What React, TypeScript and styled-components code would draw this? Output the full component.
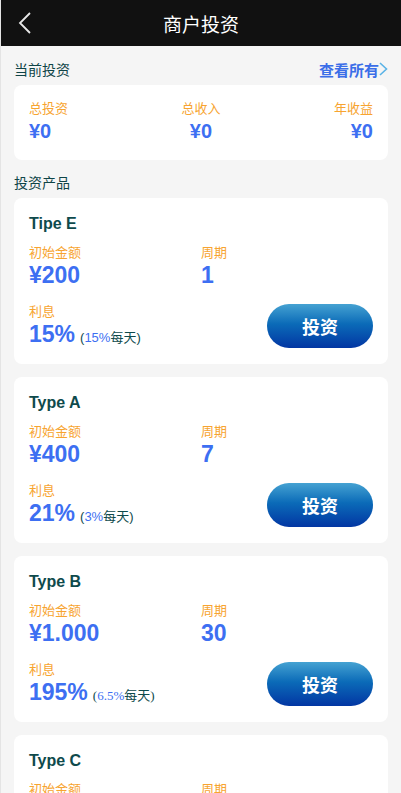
import React from 'react'
import styled, { createGlobalStyle } from 'styled-components'

const GlobalStyle = createGlobalStyle`
    body {
        margin: 0;
        background: #f5f5f5;
        font-family: 'Liberation Sans', 'Noto Sans CJK SC', sans-serif;
    }
`

const Page = styled.div`
    min-height: 793px;
    background: #f5f5f5;
    border-left: 1px solid #e4e4e4;
    box-sizing: border-box;
`

const Header = styled.div`
    height: 46px;
    background: #111111;
    display: flex;
    align-items: center;
    justify-content: center;
    position: relative;
`

const Back = styled.div`
    position: absolute;
    left: 14px;
    top: 11px;
    display: flex;
`

const HeaderTitle = styled.h1`
    margin: 0;
    color: #fff;
    font-size: 19px;
    font-weight: 400;
    font-family: 'Noto Sans CJK SC', sans-serif;
`

const Body = styled.div`
    padding: 0 13px;
`

const SectionRow = styled.div<{ $top?: number }>`
    display: flex;
    justify-content: space-between;
    align-items: center;
    height: 24px;
    margin: ${(p) => p.$top ?? 11}px 0 4px;
`

const SectionTitle = styled.span`
    font-size: 14px;
    color: #0e4447;
    font-family: 'Noto Sans CJK SC', sans-serif;
`

const More = styled.span`
    font-size: 15px;
    font-weight: 700;
    color: #3b6ee8;
    font-family: 'Noto Sans CJK SC', sans-serif;
    display: flex;
    align-items: center;
`

const Card = styled.div`
    background: #fff;
    border-radius: 8px;
    padding: 14px 15px 15px;
    margin-bottom: 13px;
`

const SummaryGrid = styled.div`
    display: grid;
    grid-template-columns: 1fr 1fr 1fr;
`

const SummaryCell = styled.div<{ $align: string }>`
    display: flex;
    flex-direction: column;
    align-items: ${(p) => p.$align};
`

const Label = styled.span`
    font-size: 13px;
    line-height: 18px;
    color: #f7a430;
    font-family: 'Noto Sans CJK SC', sans-serif;
`

const SumValue = styled.span`
    font-size: 20px;
    line-height: 28px;
    font-weight: 700;
    color: #3d6ff2;
`

const ProductCard = styled(Card)`
    padding: 15px 15px 16px;
    height: 135px;
    box-sizing: content-box;
`

const ProductTitle = styled.div`
    font-size: 16px;
    font-weight: 700;
    line-height: 22px;
    color: #0e4a4c;
    margin-bottom: 8px;
`

const TopRow = styled.div`
    display: grid;
    grid-template-columns: 172px 1fr;
    margin-bottom: 13px;
`

const Col = styled.div`
    display: flex;
    flex-direction: column;
`

const BigValue = styled.span`
    font-size: 23px;
    line-height: 28px;
    font-weight: 700;
    color: #3d6ff2;
`

const BottomRow = styled.div`
    display: flex;
    justify-content: space-between;
    align-items: flex-start;
`

const Rate = styled.div`
    display: flex;
    align-items: baseline;
`

const Daily = styled.span<{ $serif?: boolean }>`
    font-size: 13px;
    color: #0e4a4c;
    margin-left: 5px;
    font-family: ${(p) => (p.$serif ? "'Liberation Serif', serif" : "'Liberation Sans', sans-serif")};
    b {
        font-weight: 400;
        color: #3d6ff2;
    }
    i {
        font-style: normal;
        font-family: 'Noto Sans CJK SC', sans-serif;
    }
`

const InvestButton = styled.button`
    width: 106px;
    height: 44px;
    border: none;
    border-radius: 22px;
    background: linear-gradient(180deg, #45a2d2 0%, #0b6bb8 45%, #0236a3 100%);
    color: #fff;
    font-size: 18px;
    font-weight: 700;
    font-family: 'Noto Sans CJK SC', sans-serif;
    margin-top: 2px;
`

const products = [
    { name: 'Tipe E', amount: '¥200', period: '1', rate: '15%', daily: '15%' },
    { name: 'Type A', amount: '¥400', period: '7', rate: '21%', daily: '3%' },
    { name: 'Type B', amount: '¥1.000', period: '30', rate: '195%', daily: '6.5%', serif: true },
    { name: 'Type C', amount: '¥3.000', period: '60', rate: '300%', daily: '5%' },
]

const App = () => {
    return (
        <Page>
            <GlobalStyle />
            <Header>
                <Back>
                    <svg width="20" height="24" viewBox="0 0 20 24">
                        <path d="M15 2 L5 12 L15 22" fill="none" stroke="#e8e8e8" strokeWidth="1.8" />
                    </svg>
                </Back>
                <HeaderTitle>商户投资</HeaderTitle>
            </Header>
            <Body>
                <SectionRow>
                    <SectionTitle>当前投资</SectionTitle>
                    <More>
                        查看所有
                        <svg width="9" height="14" viewBox="0 0 9 14">
                            <path d="M1 1 L7.5 7 L1 13" fill="none" stroke="#5ab3e6" strokeWidth="1.6" />
                        </svg>
                    </More>
                </SectionRow>
                <Card>
                    <SummaryGrid>
                        <SummaryCell $align="flex-start">
                            <Label>总投资</Label>
                            <SumValue>¥0</SumValue>
                        </SummaryCell>
                        <SummaryCell $align="center">
                            <Label>总收入</Label>
                            <SumValue>¥0</SumValue>
                        </SummaryCell>
                        <SummaryCell $align="flex-end">
                            <Label>年收益</Label>
                            <SumValue>¥0</SumValue>
                        </SummaryCell>
                    </SummaryGrid>
                </Card>
                <SectionRow $top={-3}>
                    <SectionTitle>投资产品</SectionTitle>
                </SectionRow>
                {products.map((p) => (
                    <ProductCard key={p.name}>
                        <ProductTitle>{p.name}</ProductTitle>
                        <TopRow>
                            <Col>
                                <Label>初始金额</Label>
                                <BigValue>{p.amount}</BigValue>
                            </Col>
                            <Col>
                                <Label>周期</Label>
                                <BigValue>{p.period}</BigValue>
                            </Col>
                        </TopRow>
                        <BottomRow>
                            <Col>
                                <Label>利息</Label>
                                <Rate>
                                    <BigValue>{p.rate}</BigValue>
                                    <Daily $serif={p.serif}>
                                        (<b>{p.daily}</b>
                                        <i>每天</i>)
                                    </Daily>
                                </Rate>
                            </Col>
                            <InvestButton>投资</InvestButton>
                        </BottomRow>
                    </ProductCard>
                ))}
            </Body>
        </Page>
    )
}

export default App
